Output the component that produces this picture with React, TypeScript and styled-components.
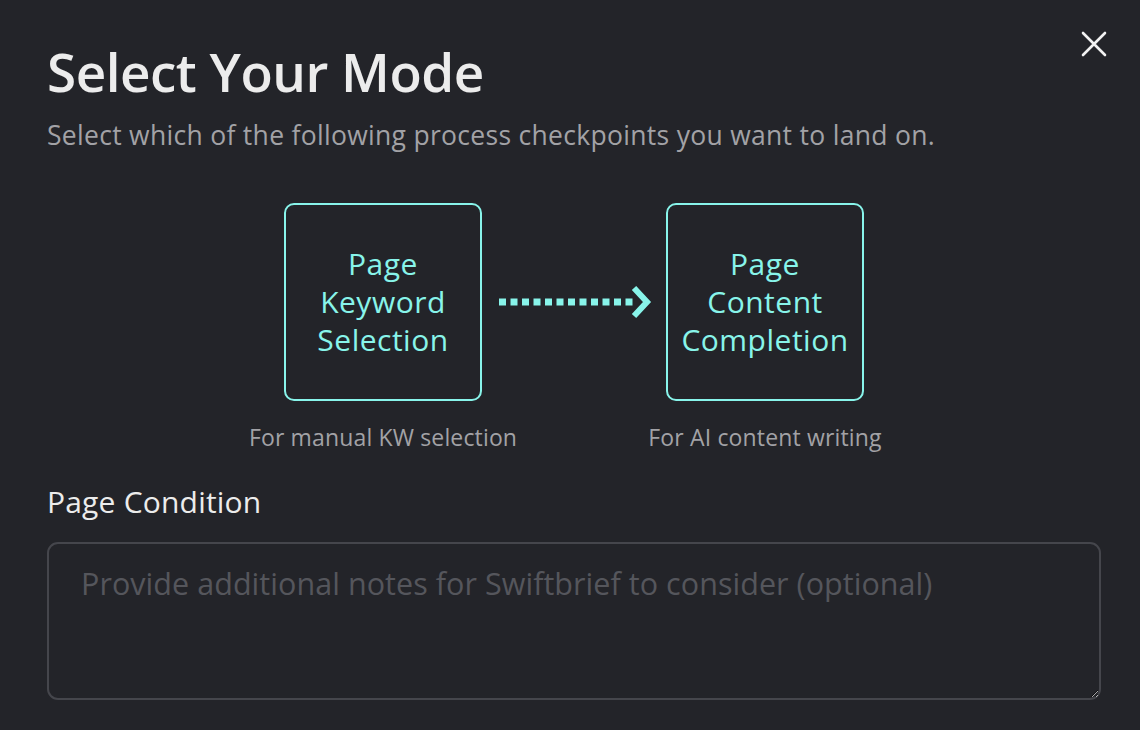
import styled, { createGlobalStyle } from "styled-components";

const GlobalStyle = createGlobalStyle`
  html, body {
    margin: 0;
    padding: 0;
    background: #232429;
  }
  body {
    font-family: "Open Sans", "Noto Sans", sans-serif;
    color: #ececec;
  }
`;

const Modal = styled.div`
  position: relative;
  width: 1140px;
  height: 730px;
  box-sizing: border-box;
  padding: 39px 39px 0 47px;
  background: #232429;
  display: flex;
  flex-direction: column;
`;

const CloseButton = styled.button`
  position: absolute;
  top: 30px;
  right: 32px;
  width: 28px;
  height: 28px;
  padding: 0;
  border: none;
  background: transparent;
  cursor: pointer;
  display: flex;
  align-items: center;
  justify-content: center;
`;

const Title = styled.h1`
  margin: 0;
  font-size: 53px;
  font-weight: 600;
  line-height: 66px;
  color: #ececec;
  letter-spacing: -0.5px;
`;

const Subtitle = styled.p`
  margin: 15px 0 0;
  font-size: 26.5px;
  line-height: 30px;
  color: #a2a2a6;
  letter-spacing: 0.3px;
`;

const Flow = styled.div`
  display: flex;
  justify-content: center;
  align-items: flex-start;
  margin-top: 53px;
`;

const Step = styled.div`
  display: flex;
  flex-direction: column;
  align-items: center;
  width: 198px;
`;

const StepBox = styled.div`
  width: 198px;
  height: 198px;
  box-sizing: border-box;
  border: 2px solid #88f4ea;
  border-radius: 10px;
  display: flex;
  align-items: center;
  justify-content: center;
  text-align: center;
  font-size: 30px;
  line-height: 38px;
  color: #88f4ea;
  letter-spacing: 0.5px;
`;

const Caption = styled.div`
  margin-top: 22px;
  font-size: 23px;
  line-height: 28px;
  color: #a2a2a6;
  white-space: nowrap;
  letter-spacing: 0.15px;
`;

const ArrowWrap = styled.div`
  height: 198px;
  display: flex;
  align-items: center;
  margin: 0 13px 0 17px;
`;

const SectionLabel = styled.h2`
  margin: 33px 0 0;
  font-size: 30px;
  font-weight: 400;
  line-height: 36px;
  color: #ececec;
  letter-spacing: 0.2px;
`;

const Notes = styled.textarea`
  margin-top: 22px;
  width: 100%;
  height: 158px;
  box-sizing: border-box;
  padding: 20px 32px;
  border: 2px solid #45464c;
  border-radius: 11px;
  background: transparent;
  color: #ececec;
  font-family: "Open Sans", "Noto Sans", sans-serif;
  font-size: 30.5px;
  line-height: 38px;
  letter-spacing: 0.05px;
  outline: none;
  resize: vertical;

  &::placeholder {
    color: #55565c;
  }
`;

const DottedArrow = () => (
  <svg width="154" height="34" viewBox="0 0 154 34">
    {Array.from({ length: 12 }).map((_, i) => (
      <rect key={i} x={i * 11.5} y={13.5} width={7} height={7} fill="#88f4ea" />
    ))}
    <path
      d="M135 3 L148 17 L135 31"
      fill="none"
      stroke="#88f4ea"
      strokeWidth="6"
    />
  </svg>
);

const App = () => {
  return (
    <>
      <GlobalStyle />
      <Modal>
        <CloseButton aria-label="Close">
          <svg width="26" height="26" viewBox="0 0 26 26">
            <path
              d="M2 2 L24 24 M24 2 L2 24"
              stroke="#f2f2f2"
              strokeWidth="2.6"
              strokeLinecap="round"
            />
          </svg>
        </CloseButton>
        <Title>Select Your Mode</Title>
        <Subtitle>
          Select which of the following process checkpoints you want to land on.
        </Subtitle>
        <Flow>
          <Step>
            <StepBox>
              Page
              <br />
              Keyword
              <br />
              Selection
            </StepBox>
            <Caption>For manual KW selection</Caption>
          </Step>
          <ArrowWrap>
            <DottedArrow />
          </ArrowWrap>
          <Step>
            <StepBox>
              Page
              <br />
              Content
              <br />
              Completion
            </StepBox>
            <Caption>For AI content writing</Caption>
          </Step>
        </Flow>
        <SectionLabel>Page Condition</SectionLabel>
        <Notes placeholder="Provide additional notes for Swiftbrief to consider (optional)" />
      </Modal>
    </>
  );
};

export default App;
